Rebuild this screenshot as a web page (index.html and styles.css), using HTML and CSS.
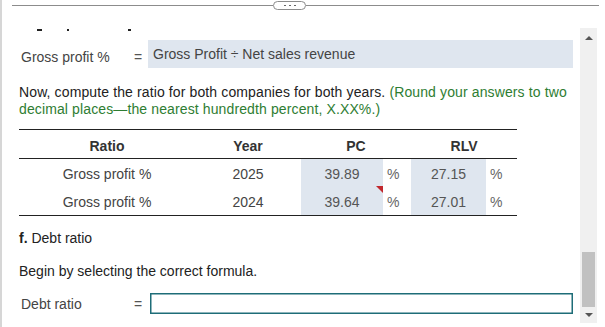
FILE: index.html
```html
<!DOCTYPE html>
<html lang="en">
<head>
  <meta charset="UTF-8" />
  <meta name="viewport" content="width=device-width, initial-scale=1.0"/>
  <title>Ratio worksheet</title>
  <link rel="stylesheet" href="styles.css">
</head>
<body>
  <div class="panel">
    <!-- Kopf mit Trennlinie -->
    <div class="topbar">
      <div class="rule left"></div>
      <div class="pill"><span class="dot"></span><span class="dot"></span><span class="dot"></span></div>
      <div class="rule"></div>
    </div>

    <div class="main">
      <div class="content">
        <div class="clipped"><span class="m1"></span><span class="m2"></span><span class="m3"></span></div>

        <div class="formula-row">
          <div class="label">Gross profit %</div>
          <div class="eq">=</div>
          <div class="formula-box">Gross Profit ÷ Net sales revenue</div>
        </div>

        <p class="instr"><span>Now, compute the ratio for both companies for both years.</span> <span class="hint">(Round your answers to two decimal places—the nearest hundredth percent, X.XX%.)</span></p>

        <table class="ratios">
          <colgroup>
            <col class="c-ratio"><col class="c-year"><col class="c-pc"><col class="c-pct"><col class="c-rlv"><col class="c-pct2">
          </colgroup>
          <thead>
            <tr><th>Ratio</th><th>Year</th><th colspan="2">PC</th><th colspan="2">RLV</th></tr>
          </thead>
          <tbody>
            <tr>
              <td>Gross profit %</td><td>2025</td>
              <td class="val">39.89</td><td class="pct">%</td>
              <td class="val">27.15</td><td class="pct">%</td>
            </tr>
            <tr>
              <td>Gross profit %</td><td>2024</td>
              <td class="val flagged">39.64</td><td class="pct">%</td>
              <td class="val">27.01</td><td class="pct">%</td>
            </tr>
          </tbody>
        </table>

        <p class="part"><b>f.</b> Debt ratio</p>
        <p class="lead">Begin by selecting the correct formula.</p>

        <div class="formula-row debt">
          <div class="label">Debt ratio</div>
          <div class="eq">=</div>
          <div class="formula-input"></div>
        </div>
      </div>

      <div class="scrollbar">
        <div class="arrow up"></div>
        <div class="track"><div class="thumb"></div></div>
        <div class="arrow down"></div>
      </div>
    </div>
  </div>
</body>
</html>
```

FILE: styles.css
```css
body { margin: 0; background: #fff; font-family: "Liberation Sans", Arial, sans-serif; font-size: 14px; color: #333; overflow: hidden; }
.panel { height: 327px; border-left: 2px solid #d6d6d6; box-sizing: border-box; }

.topbar { display: flex; align-items: center; height: 10px; padding: 0 6px 0 10px; margin-bottom: 18px; }
.rule { flex: 1; border-top: 1px solid #8c8c8c; }
.rule.left { flex: 0 0 261px; }
.pill { display: flex; align-items: center; justify-content: center; gap: 3px; width: 33px; height: 9px; border: 1px solid #8c8c8c; border-radius: 6px; box-sizing: border-box; background: #fff; }
.dot { width: 2px; height: 1px; background: #666; }

.main { display: flex; height: 295px; }
.content { flex: 1; padding-left: 17px; overflow: hidden; }

.clipped { display: flex; height: 12px; padding-top: 1px; box-sizing: border-box; }
.clipped span { height: 2px; background: #222; }
.m1 { width: 5px; margin-left: 18px; }
.m2 { width: 2px; margin-left: 25px; }
.m3 { width: 3px; margin-left: 59px; }

.formula-row { display: flex; align-items: flex-start; height: 28px; padding-right: 7px; }
.label { width: 113px; padding: 7px 0 0 2px; line-height: 20px; color: #444; }
.eq { width: 14px; padding-top: 7px; line-height: 20px; color: #555; }
.formula-box { flex: 1; height: 28px; padding: 4px 5px; box-sizing: border-box; line-height: 20px; background: #dfe6ef; color: #444; }

.instr { margin: 16px 0 0; line-height: 17px; color: #222; letter-spacing: 0.12px; }
.hint { color: #2e7d32; }

.ratios { margin-top: 11px; width: 498px; border-collapse: collapse; table-layout: fixed; border-top: 1px solid #222; border-bottom: 1px solid #222; }
.c-ratio { width: 176px; }
.c-year { width: 106px; }
.c-pc { width: 82px; }
.c-pct { width: 28px; }
.c-rlv { width: 75px; }
.c-pct2 { width: 31px; }
.ratios th { padding: 6px 0 2px; line-height: 20px; font-weight: bold; color: #333; border-bottom: 1px solid #222; }
.ratios td { padding: 5px 0 3px; line-height: 20px; text-align: center; color: #444; }
.ratios td.val { background: #dfe6ef; color: #555; }
.ratios td.pct { text-align: left; padding-left: 4px; color: #666; }
.flagged { position: relative; }
.flagged::after { content: ""; position: absolute; top: -1px; right: 0; border-top: 7px solid #c1272d; border-left: 7px solid transparent; }

.part { margin: 12px 0 0; line-height: 20px; color: #222; }
.lead { margin: 13px 0 0; line-height: 20px; color: #222; }

.debt { margin-top: 12px; height: 21px; }
.debt .label, .debt .eq { padding-top: 1px; }
.formula-input { flex: 1; height: 21px; margin-left: 2px; border: 1px solid #1e6d78; box-shadow: inset 0 0 0 0.5px #1e6d78; box-sizing: border-box; }

.scrollbar { display: flex; flex-direction: column; width: 17px; margin-right: 8px; background: #f0f0f0; }
.arrow { height: 16px; display: flex; justify-content: center; }
.arrow.up { align-items: flex-start; padding-top: 8px; box-sizing: border-box; }
.arrow.down { align-items: center; }
.arrow.up::before { content: ""; border-bottom: 4px solid #555; border-left: 4px solid transparent; border-right: 4px solid transparent; }
.arrow.down::before { content: ""; border-top: 4px solid #555; border-left: 4px solid transparent; border-right: 4px solid transparent; }
.track { flex: 1; padding: 0 2px; }
.thumb { margin-top: 208px; height: 55px; background: #c1c1c1; }
```
